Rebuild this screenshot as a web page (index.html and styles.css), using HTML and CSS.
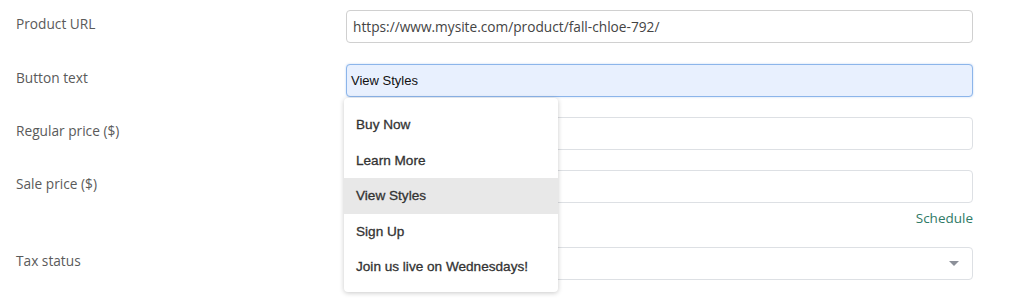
FILE: index.html
```html
<!DOCTYPE html>
<html lang="en">
  <head>
    <meta charset="UTF-8" />
    <meta name="viewport" content="width=device-width, initial-scale=1.0" />
    <title>Product data</title>
    <link rel="stylesheet" href="styles.css">
  </head>
  <body>
    <div id="product-form">
      <div class="form-row">
        <label class="form-label" for="product-url">Product URL</label>
        <div class="form-field">
          <div class="text-input" id="product-url">https://www.mysite.com/product/fall-chloe-792/</div>
        </div>
      </div>

      <div class="form-row">
        <label class="form-label" for="button-text">Button text</label>
        <div class="form-field combo">
          <div class="text-input focused" id="button-text">View Styles</div>
          <ul class="combo-menu">
            <li>Buy Now</li>
            <li>Learn More</li>
            <li class="active">View Styles</li>
            <li>Sign Up</li>
            <li>Join us live on Wednesdays!</li>
          </ul>
        </div>
      </div>

      <div class="form-row">
        <label class="form-label" for="regular-price">Regular price ($)</label>
        <div class="form-field">
          <div class="text-input light" id="regular-price"></div>
        </div>
      </div>

      <div class="form-row">
        <label class="form-label" for="sale-price">Sale price ($)</label>
        <div class="form-field">
          <div class="text-input light" id="sale-price"></div>
          <a href="#" class="schedule-link">Schedule</a>
        </div>
      </div>

      <div class="form-row">
        <label class="form-label" for="tax-status">Tax status</label>
        <div class="form-field">
          <div class="text-input light select" id="tax-status">
            <svg class="select-arrow" width="10" height="5" viewBox="0 0 10 5"><path d="M0 0h10L5 5z" fill="#8c9099" /></svg>
          </div>
        </div>
      </div>
    </div>
  </body>
</html>
```

FILE: styles.css
```css
body {
  margin: 0;
  padding: 0;
  background-color: #fff;
  font-family: 'Open Sans', sans-serif;
  color: #555;
}

#product-form {
  padding: 10px 51px 0 16px;
}

.form-row {
  display: grid;
  grid-template-columns: 330px 1fr;
  margin-bottom: 20px;
}

.form-row:first-child {
  margin-bottom: 21px;
}

.form-label {
  font-size: 13.7px;
  line-height: 20px;
  padding-top: 4px;
  color: #5a5a5a;
}

.form-field {
  display: flex;
  flex-direction: column;
}

.combo {
  position: relative;
}

.text-input {
  box-sizing: border-box;
  height: 33px;
  padding: 0 6px;
  display: flex;
  align-items: center;
  border: 1px solid #d0d0d0;
  border-radius: 4px;
  font-size: 13.7px;
  color: #444;
}

.text-input.light {
  border-color: #dde0e4;
}

.text-input.focused {
  background-color: #e8f0fe;
  border-color: #8cb5ea;
  box-shadow: 0 0 2px rgba(120, 170, 235, 0.5);
  font-family: 'Liberation Sans', Arial, sans-serif;
  font-size: 13px;
  color: #111;
  padding-left: 4px;
}

.select {
  justify-content: flex-end;
  padding-right: 13px;
}

.schedule-link {
  align-self: flex-end;
  margin-top: 5px;
  margin-bottom: -1px;
  font-size: 13.5px;
  line-height: 20px;
  color: #2f7a66;
  text-decoration: none;
}

.combo-menu {
  position: absolute;
  top: 34px;
  left: -2px;
  width: 214px;
  margin: 0;
  padding: 9px 0 7px;
  list-style: none;
  background-color: #fff;
  border-radius: 4px;
  box-shadow: 0 1px 5px rgba(0, 0, 0, 0.22);
  z-index: 2;
}

.combo-menu li {
  height: 35.5px;
  line-height: 35.5px;
  padding: 0 12px;
  font-family: 'Liberation Sans', Arial, sans-serif;
  font-size: 13.6px;
  color: #333;
  -webkit-text-stroke: 0.3px #333;
}

.combo-menu li.active {
  background-color: #e8e8e8;
}
```
